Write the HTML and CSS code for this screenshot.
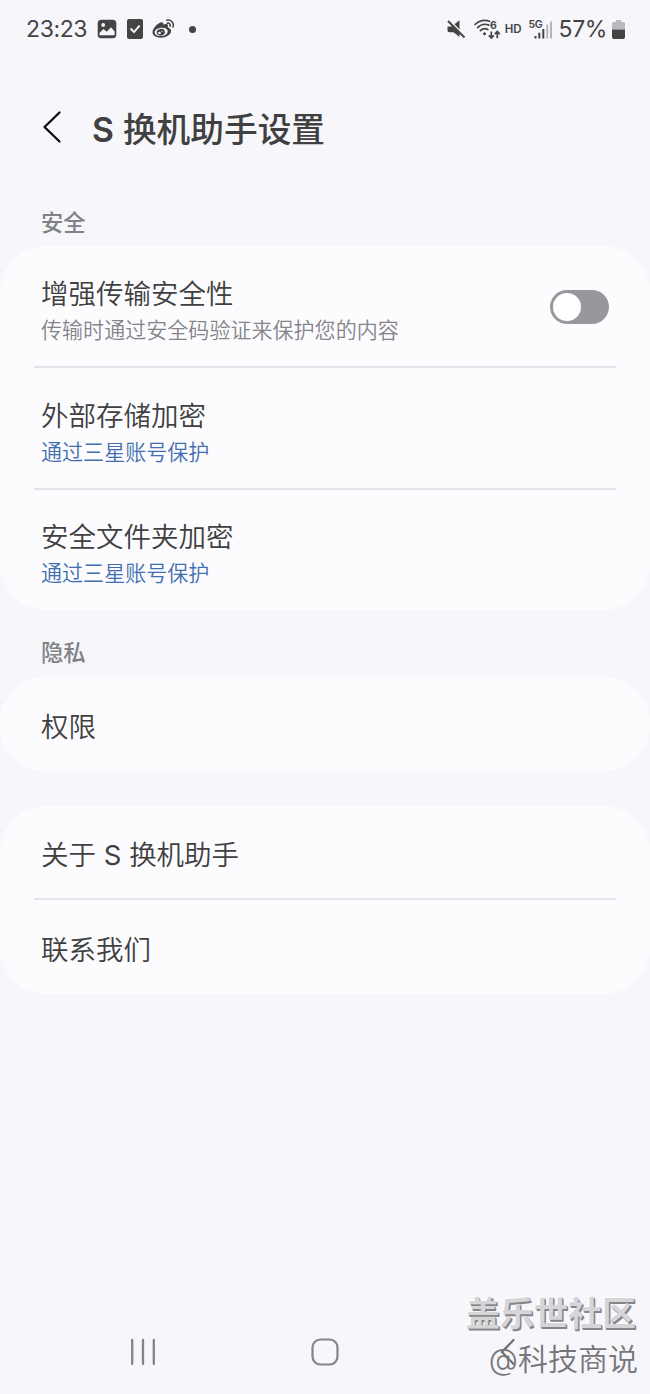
FILE: index.html
```
<!DOCTYPE html>
<html lang="zh-CN">
	<head>
	<meta charset="utf-8">
	<title>S 换机助手设置</title>
	<meta name="viewport" content="width=device-width, initial-scale=1.0">
	<link rel="stylesheet" href="styles.css">
	</head>
	<body>

	<div class="screen">
		<!-- status bar -->
		<div class="status">
			<span class="status__time">23:23</span>
			<svg class="status__photo" width="20" height="20" viewBox="0 0 20 20">
				<rect x="0.7" y="0.7" width="18.6" height="18.6" rx="3.6" fill="#444"/>
				<circle cx="6.2" cy="6" r="1.9" fill="#f6f6fb"/>
				<path d="M2.5 16.2V14l4-4 3.2 2.8L14 8.2l3.6 4.3v3.7z" fill="#f6f6fb"/>
			</svg>
			<svg class="status__check" width="16" height="20" viewBox="0 0 16 20">
				<rect width="16" height="20" rx="2" fill="#444"/>
				<path d="M3.6 9.5l3.4 3.6 5.6-6.4" fill="none" stroke="#f6f6fb" stroke-width="2"/>
			</svg>
			<svg class="status__weibo" width="23" height="20" viewBox="0 0 23 20">
				<path d="M9.3 3.3c1.5-.4 2.3.5 1.9 2.3 2.3-1 5-1.1 4.8 1.2-.1.8-.4 1.3-.2 1.6 1.9.6 3.5 1.7 3.3 3.9-.3 3.6-4.9 6.4-10 6.4-4.7 0-8.6-2.1-8.6-5.5C.5 9.7 5.5 4.2 9.3 3.3z" fill="#444"/>
				<ellipse cx="9.2" cy="12.9" rx="6.6" ry="4.2" transform="rotate(-8 9.2 12.9)" fill="#f6f6fb"/>
				<ellipse cx="8.8" cy="13.2" rx="4.1" ry="3.3" transform="rotate(-15 8.8 13.2)" fill="#444"/>
				<circle cx="7.5" cy="14" r="1.3" fill="#f6f6fb"/>
				<circle cx="10" cy="12.5" r=".6" fill="#f6f6fb"/>
				<path d="M14.8 1.2c4.2-1 7.5 2.6 6.2 6.8M15.2 4.2c2-.4 3.4 1 2.9 3" fill="none" stroke="#444" stroke-width="1.5" stroke-linecap="round"/>
			</svg>
			<span class="status__dot"></span>

			<div class="status__right">
				<svg width="19" height="20" viewBox="0 0 19 20">
					<path d="M.5 7.5h4L12.5 1.2V18L6.5 13.3h-4c-1.300 0-2-.7-2-2z" fill="#444"/>
					<path d="M2.2 1.2l16 16.6" stroke="#f6f6fb" stroke-width="2"/>
					<path d="M1 2l16.5 16.5" stroke="#444" stroke-width="1.9"/>
				</svg>
				<svg class="status__wifi" width="28" height="21" viewBox="0 0 28 21">
					<path d="M1 5.5c4-4 10-5.2 14.5-3.2M3.6 8.6c3-3.1 7.5-4 11.2-2.5M6.4 11.7c2-2.1 5-2.6 7.4-1.2" fill="none" stroke="#444" stroke-width="1.7" stroke-linecap="round"/>
					<circle cx="10.5" cy="14.7" r="1.5" fill="#444"/>
					<path d="M17.3 12.5v6M14.8 16.3l2.5 2.6 2.5-2.6M23.3 19.2v-6M20.8 15.2l2.5-2.6 2.5 2.6" fill="none" stroke="#444" stroke-width="1.7"/>
					<text x="16" y="9.5" class="status__wifi-num">6</text>
				</svg>
				<span class="status__hd">HD</span>
				<svg class="status__signal" width="24" height="23" viewBox="0 0 24 23">
					<text x="-.5" y="9.5" class="status__net">5G</text>
					<path d="M6.5 18v2.5M10.3 14.8v5.7M14.3 11v9.5" stroke="#444" stroke-width="2"/>
					<path d="M18.2 6.5v14M22 3.5v17" stroke="#b4b4b8" stroke-width="2"/>
				</svg>
				<span class="status__percent">57%</span>
				<svg class="status__battery" width="13" height="19" viewBox="0 0 13 19">
					<path d="M4 0h5v2h2.5Q13 2 13 3.5V9.500H0v-6Q0 2 1.5 2H4z" fill="#b9b9bd"/>
					<path d="M0 9.5h13V17q0 2-2 2H2q-2 0-2-2z" fill="#444"/>
				</svg>
			</div>
		</div>

		<!-- title -->
		<div class="header">
			<svg class="header__back" width="20" height="34" viewBox="0 0 20 34">
				<path d="M17.5 2.5L2.5 17l15 14.5" fill="none" stroke="#0c0c0c" stroke-width="2.3" stroke-linecap="round" stroke-linejoin="round"/>
			</svg>
			<h1 class="header__title"><span class="header__latin">S</span> 换机助手设置</h1>
		</div>

		<h2 class="section">安全</h2>
		<div class="card">
			<div class="row">
				<div class="row__text">
					<div class="row__title">增强传输安全性</div>
					<div class="row__sub">传输时通过安全码验证来保护您的内容</div>
				</div>
				<span class="toggle"><span class="toggle__knob"></span></span>
			</div>
			<div class="row">
				<div class="row__text">
					<div class="row__title">外部存储加密</div>
					<div class="row__sub row__sub--link">通过三星账号保护</div>
				</div>
			</div>
			<div class="row row--folder">
				<div class="row__text">
					<div class="row__title">安全文件夹加密</div>
					<div class="row__sub row__sub--link">通过三星账号保护</div>
				</div>
			</div>
		</div>

		<h2 class="section section--privacy">隐私</h2>
		<div class="card">
			<div class="row row--single">
				<div class="row__title">权限</div>
			</div>
		</div>

		<div class="card card--about">
			<div class="row row--single row--about">
				<div class="row__title">关于 <span class="row__latin">S</span> 换机助手</div>
			</div>
			<div class="row row--single">
				<div class="row__title">联系我们</div>
			</div>
		</div>

		<!-- navigation bar -->
		<div class="nav">
			<svg width="28" height="28" viewBox="0 0 28 28">
				<path d="M3.2 2v24M14 2v24M24.8 2v24" stroke="#858585" stroke-width="2.3" stroke-linecap="round"/>
			</svg>
			<svg width="28" height="28" viewBox="0 0 28 28">
				<rect x="1.5" y="1.5" width="25" height="25" rx="8" fill="none" stroke="#858585" stroke-width="2.2"/>
			</svg>
			<svg width="28" height="28" viewBox="0 0 28 28">
				<path d="M20.5 2L9 14l11.500 12" fill="none" stroke="#707070" stroke-width="2.2" stroke-linecap="round"/>
			</svg>
		</div>

		<div class="watermark">
			<div class="watermark__site">盖乐世社区</div>
			<div class="watermark__user">@科技商说</div>
		</div>
	</div>

</body>
</html>
```
FILE: styles.css
```
body {
	margin: 0;
	background: #f6f6fb;
	color: #404040;
	font-family: Inter, "Noto Sans CJK SC", sans-serif;
}
.screen {
	position: relative;
	display: flex;
	flex-direction: column;
	width: 650px;
	height: 1394px;
	overflow: hidden;
}

/* status bar */
.status {
	display: flex;
	align-items: center;
	height: 58px;
	padding: 0 25px 0 26px;
	color: #444;
}
.status__time {
	width: 61px;
	font-size: 23px;
	letter-spacing: -.4px;
	white-space: nowrap;
}
.status__photo {
	margin-left: 10px;
}
.status__check {
	margin-left: 10px;
}
.status__weibo {
	margin-left: 9px;
}
.status__dot {
	width: 7px;
	height: 7px;
	margin-left: 14px;
	border-radius: 50%;
	background: #444;
}
.status__right {
	display: flex;
	align-items: center;
	margin-left: auto;
}
.status__wifi {
	margin-left: 8px;
	overflow: visible;
}
.status__wifi-num {
	font-size: 10.5px;
	font-weight: 700;
	fill: #444;
}
.status__hd {
	margin-left: 3px;
	font-size: 11.5px;
	font-weight: 600;
}
.status__signal {
	margin-left: 7px;
	overflow: visible;
}
.status__net {
	font-size: 10.5px;
	font-weight: 600;
	letter-spacing: -.3px;
	fill: #444;
}
.status__percent {
	margin-left: 6px;
	font-size: 23px;
	letter-spacing: -.4px;
}
.status__battery {
	margin-left: 5px;
}

/* title */
.header {
	display: flex;
	align-items: center;
	height: 140px;
	padding-left: 42px;
}
.header__back {
	margin-bottom: 2px;
}
.header__title {
	margin: 3px 0 0 30px;
	font-size: 33.7px;
	font-weight: 500;
	line-height: 48px;
}
.header__latin {
	font-weight: 600;
}

.section {
	height: 48px;
	margin: 0;
	padding-left: 41px;
	color: #818186;
	font-size: 22.3px;
	font-weight: 500;
	line-height: 50px;
}
.section--privacy {
	height: 67px;
	line-height: 86px;
}

/* cards */
.card {
	border-radius: 46px;
	background: #fcfcff;
}
.card--about {
	margin-top: 35px;
}
.row {
	position: relative;
	display: flex;
	align-items: center;
	justify-content: space-between;
	box-sizing: border-box;
	height: 120px;
	padding: 4px 41px 0;
}
.row + .row {
	margin-top: 2px;
}
.row + .row::before {
	content: '';
	position: absolute;
	top: -2px;
	left: 34px;
	right: 34px;
	height: 2px;
	background: #e4e4e8;
}
.row__text {
	padding-top: 7px;
}
.row--folder {
	padding-top: 2px;
}
.row--single {
	height: 94px;
	padding-top: 6px;
}
.row--about {
	height: 92px;
}
.row__title {
	font-size: 27.5px;
	font-weight: 350;
	line-height: 38px;
}
.row__latin {
	font-weight: 400;
}
.row__sub {
	color: #848489;
	font-size: 21.05px;
	font-weight: 350;
	line-height: 36px;
}
.row__sub--link {
	color: #416fae;
}

.toggle {
	box-sizing: border-box;
	width: 59px;
	height: 34px;
	margin-bottom: 3px;
	padding: 3px;
	border-radius: 17px;
	background: #98979c;
}
.toggle__knob {
	display: block;
	width: 28px;
	height: 28px;
	border-radius: 50%;
	background: #fff;
}

/* navigation bar */
.nav {
	display: flex;
	justify-content: space-between;
	margin-top: auto;
	padding: 0 129px 28px;
}

/* watermark lies over the page */
.watermark {
	position: absolute;
	right: 12px;
	bottom: 12px;
	text-align: right;
	white-space: nowrap;
}
.watermark__site {
	margin-right: 2px;
	color: #d6d6d9;
	font-size: 34px;
	font-weight: 700;
	line-height: 44px;
	text-shadow: 1px 1px 0 #85858a, 1.5px 2px 0 #85858a, -1px -1px 0 #fff;
}
.watermark__user {
	color: #76767a;
	font-size: 30px;
	font-weight: 350;
	line-height: 46px;
}
```
